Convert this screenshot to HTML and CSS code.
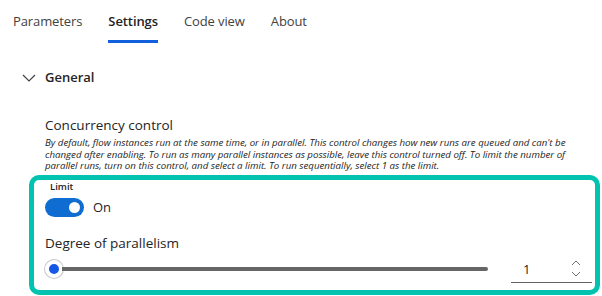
FILE: index.html
```html
<!DOCTYPE html>
<html>
<head>
<meta charset="utf-8">
<link rel="stylesheet" href="styles.css">
</head>
<body>
<nav class="tabs">
  <div class="tab">Parameters</div>
  <div class="tab active">Settings</div>
  <div class="tab">Code view</div>
  <div class="tab">About</div>
</nav>
<section class="section">
  <div class="section-head">
    <svg class="chev" width="14" height="8" viewBox="0 0 14 8"><path d="M1 1 L7 7 L13 1" fill="none" stroke="#424242" stroke-width="1.2"/></svg>
    <span>General</span>
  </div>
  <div class="setting">
    <div class="setting-title">Concurrency control</div>
    <p class="setting-desc">By default, flow instances run at the same time, or in parallel. This control changes how new runs are queued and can't be changed after enabling. To run as many parallel instances as possible, leave this control turned off. To limit the number of parallel runs, turn on this control, and select a limit. To run sequentially, select 1 as the limit.</p>
  </div>
  <div class="highlight">
    <div class="limit-label">Limit</div>
    <div class="switch-row">
      <span class="switch"><span class="knob"></span></span>
      <span class="switch-text">On</span>
    </div>
    <div class="degree-label">Degree of parallelism</div>
    <div class="slider-row">
      <div class="slider">
        <span class="thumb"></span>
        <span class="track"></span>
      </div>
      <div class="spin">
        <span class="spin-value">1</span>
        <span class="spin-arrows">
          <svg width="10" height="6" viewBox="0 0 10 6"><path d="M1 5 L5 1 L9 5" fill="none" stroke="#707070" stroke-width="1"/></svg>
          <svg width="10" height="6" viewBox="0 0 10 6"><path d="M1 1 L5 5 L9 1" fill="none" stroke="#707070" stroke-width="1"/></svg>
        </span>
      </div>
    </div>
  </div>
</section>
</body>
</html>
```
FILE: styles.css
```css
* { box-sizing: border-box; }
body {
  margin: 0;
  font-family: "Open Sans", "Noto Sans", sans-serif;
  color: #242424;
  background: #fff;
  width: 602px;
  height: 296px;
  overflow: hidden;
}
.tabs {
  display: flex;
  gap: 26px;
  padding-left: 13px;
}
.tab {
  font-size: 13px;
  line-height: 20px;
  padding-top: 11px;
  padding-bottom: 9px;
  border-bottom: 3px solid transparent;
  color: #424242;
  letter-spacing: -0.1px;
}
.tab.active {
  font-weight: 600;
  color: #242424;
  border-bottom-color: #1160dd;
}
.section { padding-left: 22px; }
.section-head {
  display: flex;
  align-items: center;
  gap: 9px;
  margin-top: 24px;
  height: 20px;
  font-size: 13px;
  font-weight: 600;
  color: #242424;
}
.chev { margin-top: 1px; }
.setting { padding-left: 23px; margin-top: 28px; }
.setting-title {
  font-size: 13.5px;
  line-height: 20px;
}
.setting-desc {
  margin: 2px 0 0;
  font-size: 9.7px;
  line-height: 11.5px;
  font-style: italic;
  width: 532px;
}
.highlight {
  margin: 3px 2px 2px 7px;
  border: 5px solid #02c3b0;
  border-radius: 10px;
  height: 120px;
  padding: 1px 0 0 11px;
}
.limit-label {
  font-size: 9.5px;
  font-weight: 600;
  line-height: 12px;
  padding-left: 5px;
}
.switch-row {
  display: flex;
  align-items: center;
  gap: 9px;
  margin-top: 5px;
}
.switch {
  width: 39px;
  height: 19px;
  border-radius: 10px;
  background: #0f6cd0;
  display: flex;
  align-items: center;
  justify-content: flex-end;
  padding-right: 4px;
}
.knob {
  width: 11px;
  height: 11px;
  border-radius: 50%;
  background: #fff;
}
.switch-text { font-size: 13px; }
.degree-label {
  font-size: 13.5px;
  line-height: 20px;
  margin-top: 16px;
}
.slider-row {
  display: flex;
  align-items: flex-start;
  margin-top: 6px;
}
.slider {
  display: flex;
  align-items: center;
  width: 443px;
  height: 20px;
}
.thumb {
  width: 18px;
  height: 18px;
  border-radius: 50%;
  background: #1558e6;
  border: 4px solid #fff;
  box-shadow: 0 0 0 1px #c8c8c8;
  flex: none;
}
.track {
  flex: 1;
  height: 4px;
  background: #666;
  border-radius: 0 2px 2px 0;
  margin-left: -1px;
}
.spin {
  margin-left: 23px;
  width: 81px;
  height: 25px;
  border-bottom: 1.5px solid #616161;
  display: flex;
  align-items: center;
  justify-content: space-between;
  padding: 0 11px 2px 12px;
  margin-top: -1px;
}
.spin-value { font-size: 13px; }
.spin-arrows {
  display: flex;
  flex-direction: column;
  gap: 5px;
}
.spin-arrows svg { display: block; }
```
